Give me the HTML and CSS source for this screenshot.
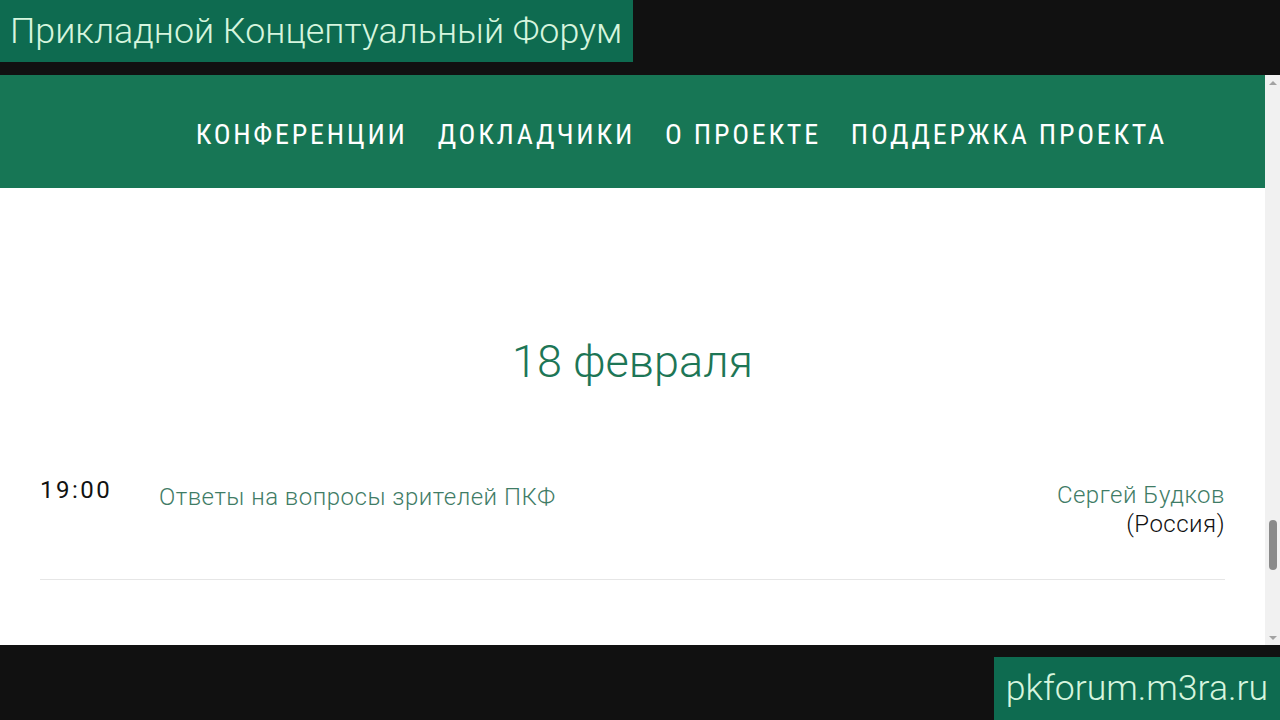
FILE: index.html
```html
<!DOCTYPE html>
<html lang="ru">
<head>
<meta charset="utf-8">
<title>Прикладной Концептуальный Форум</title>
<link rel="stylesheet" href="styles.css">
</head>
<body>
<div class="screen">
  <header class="top">
    <div class="title-box">Прикладной Концептуальный Форум</div>
  </header>
  <div class="window">
    <main class="page">
      <nav class="nav">
        <a class="nav-item">КОНФЕРЕНЦИИ</a>
        <a class="nav-item">ДОКЛАДЧИКИ</a>
        <a class="nav-item">О ПРОЕКТЕ</a>
        <a class="nav-item">ПОДДЕРЖКА ПРОЕКТА</a>
      </nav>
      <section class="day">
        <h2 class="day-title">18 февраля</h2>
        <div class="talk">
          <div class="talk-time">19:00</div>
          <div class="talk-title">Ответы на вопросы зрителей ПКФ</div>
          <div class="talk-speaker">
            <div class="speaker-name">Сергей Будков</div>
            <div class="speaker-country">(Россия)</div>
          </div>
        </div>
      </section>
    </main>
    <div class="scrollbar">
      <div class="arrow arrow-up"></div>
      <div class="track"><div class="thumb"></div></div>
      <div class="arrow arrow-down"></div>
    </div>
  </div>
  <footer class="bottom">
    <div class="url-box">pkforum.m3ra.ru</div>
  </footer>
</div>
</body>
</html>
```

FILE: styles.css
```css
html, body {
  margin: 0;
  padding: 0;
}
body {
  background: #111111;
  font-family: Roboto, "Noto Sans", sans-serif;
  width: 1280px;
  height: 720px;
  overflow: hidden;
}
.screen {
  display: flex;
  flex-direction: column;
  width: 1280px;
  height: 720px;
}
.top {
  height: 75px;
  flex: none;
}
.title-box {
  display: inline-block;
  height: 62px;
  box-sizing: border-box;
  padding: 0 11px 0 10px;
  background: #0e6b50;
  color: #d6f5de;
  font-weight: 300;
  font-size: 35.8px;
  line-height: 62px;
  white-space: nowrap;
}
.window {
  height: 570px;
  flex: none;
  display: flex;
}
.page {
  flex: 1;
  background: #ffffff;
  overflow: hidden;
}
.nav {
  height: 113px;
  background: #177655;
  display: flex;
  justify-content: flex-end;
  align-items: center;
  gap: 30px;
  padding: 6px 98px 0 0;
  box-sizing: border-box;
}
.nav-item {
  color: #ffffff;
  font-size: 28px;
  font-stretch: 80%;
  font-weight: 400;
  letter-spacing: 2.75px;
  white-space: nowrap;
}
.day {
  padding: 0 40px;
}
.day-title {
  margin: 148px 0 0 0;
  text-align: center;
  font-size: 45px;
  line-height: 52px;
  font-weight: 300;
  color: #1d7656;
}
.talk {
  margin-top: 87px;
  display: flex;
  align-items: flex-start;
  padding-bottom: 40px;
  border-bottom: 1px solid #e6e6e6;
}
.talk-time {
  width: 119px;
  flex: none;
  font-size: 24px;
  line-height: 30px;
  letter-spacing: 2.5px;
  color: #111111;
}
.talk-title {
  flex: 1;
  padding-top: 7px;
  font-size: 24px;
  line-height: 30px;
  letter-spacing: 0.5px;
  font-weight: 300;
  color: #3f7c66;
}
.talk-speaker {
  padding-top: 6px;
  text-align: right;
  font-size: 24px;
  line-height: 29px;
  letter-spacing: 0.5px;
  font-weight: 300;
}
.speaker-name {
  color: #3f7c66;
}
.speaker-country {
  color: #111111;
}
.scrollbar {
  width: 15px;
  flex: none;
  background: #f1f1f1;
  display: flex;
  flex-direction: column;
  align-items: center;
}
.arrow {
  height: 15px;
  width: 15px;
  flex: none;
  display: flex;
  align-items: center;
  justify-content: center;
}
.arrow-up::before {
  content: "";
  border-left: 4px solid transparent;
  border-right: 4px solid transparent;
  border-bottom: 4px solid #a3a3a3;
}
.arrow-down::before {
  content: "";
  border-left: 4px solid transparent;
  border-right: 4px solid transparent;
  border-top: 4px solid #a3a3a3;
}
.track {
  flex: 1;
  width: 15px;
  display: flex;
  flex-direction: column;
  align-items: center;
  padding-top: 430px;
  box-sizing: border-box;
}
.thumb {
  width: 8px;
  height: 50px;
  border-radius: 4px;
  background: #8a8a8a;
}
.bottom {
  flex: 1;
  display: flex;
  justify-content: flex-end;
  align-items: flex-end;
}
.url-box {
  height: 63px;
  box-sizing: border-box;
  padding: 0 12px 0 12px;
  background: #0e6b50;
  color: #d6f5de;
  font-weight: 300;
  font-size: 35.6px;
  line-height: 63px;
  white-space: nowrap;
}
```
